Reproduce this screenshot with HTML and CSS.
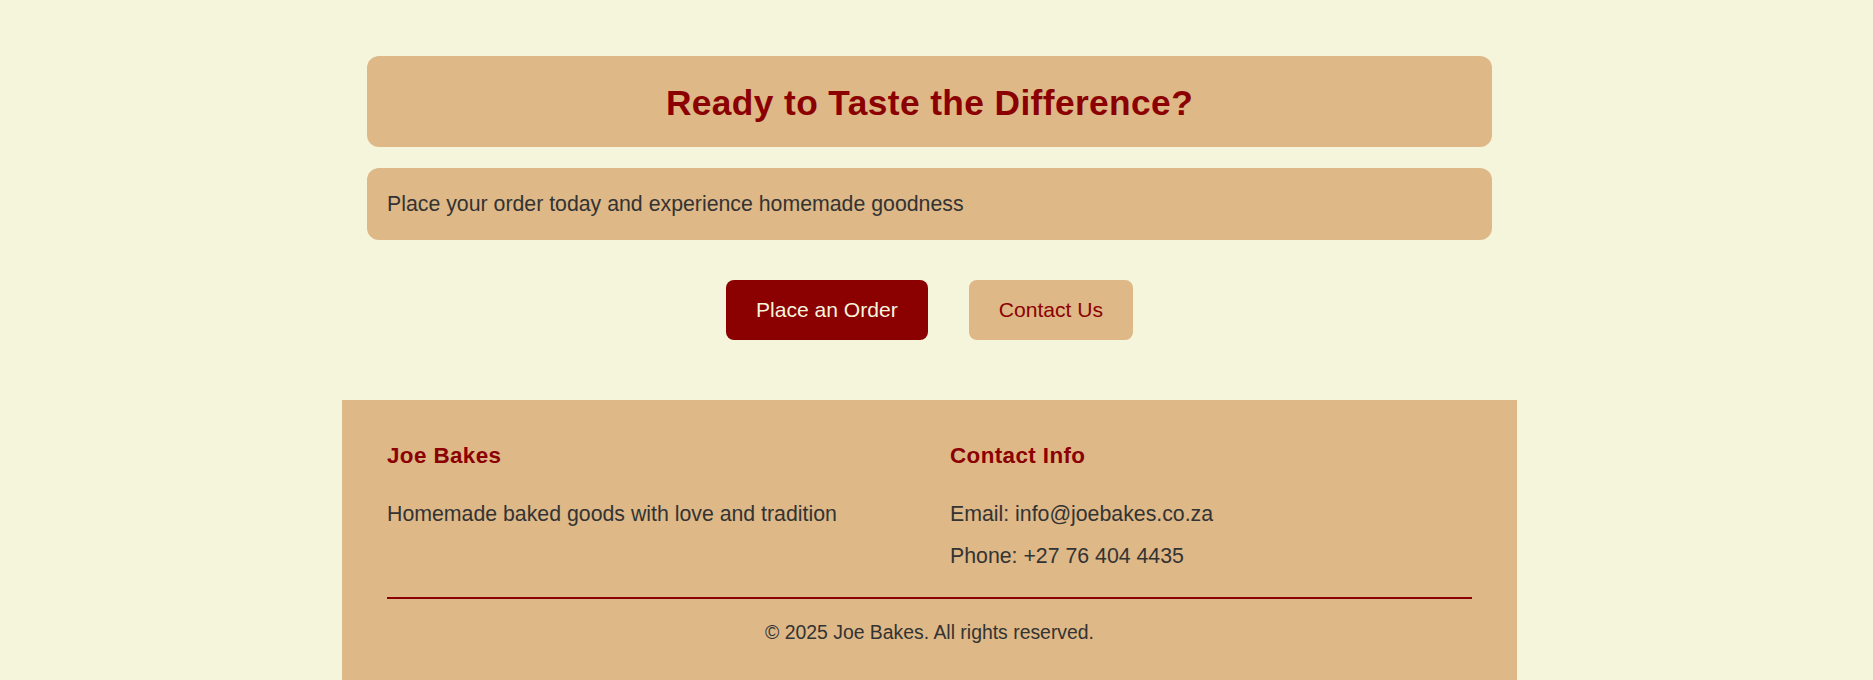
FILE: index.html
```html
<!DOCTYPE html>
<html lang="en">
<head>
<meta charset="utf-8">
<title>Joe Bakes</title>
<link rel="stylesheet" href="styles.css">
</head>
<body>
<div class="page">
  <section class="cta">
    <h2 class="cta-title">Ready to Taste the Difference?</h2>
    <p class="cta-text">Place your order today and experience homemade goodness</p>
    <div class="cta-actions">
      <a class="btn btn-primary" href="#">Place an Order</a>
      <a class="btn btn-secondary" href="#">Contact Us</a>
    </div>
  </section>
  <footer class="footer">
    <div class="footer-cols">
      <div class="footer-col">
        <h3 class="footer-heading">Joe Bakes</h3>
        <p class="footer-text">Homemade baked goods with love and tradition</p>
      </div>
      <div class="footer-col">
        <h3 class="footer-heading">Contact Info</h3>
        <p class="footer-text">Email: info@joebakes.co.za</p>
        <p class="footer-text">Phone: +27 76 404 4435</p>
      </div>
    </div>
    <div class="footer-bottom">
      <p class="copyright">&copy; 2025 Joe Bakes. All rights reserved.</p>
    </div>
  </footer>
</div>
</body>
</html>
```
FILE: styles.css
```css
html, body {
  margin: 0;
}
body {
  padding: 0 14px 0 0;
  background: #F5F5DC;
  color: #333;
  font-family: "Liberation Sans", Arial, sans-serif;
}
.page {
  max-width: 1175px;
  margin: 0 auto;
}
.cta {
  padding: 56px 25px 60px;
}
.cta-title {
  margin: 0;
  padding: 25px 24px 23px;
  background: #DEB887;
  border-radius: 12px;
  color: #8B0000;
  font-size: 35.3px;
  line-height: 43px;
  letter-spacing: 0.4px;
  font-weight: bold;
  text-align: center;
}
.cta-text {
  margin: 21px 0 0;
  padding: 24px 20px;
  background: #DEB887;
  border-radius: 12px;
  font-size: 21.3px;
  line-height: 24px;
}
.cta-actions {
  display: flex;
  justify-content: center;
  gap: 41px;
  margin-top: 40px;
}
.btn {
  display: block;
  height: 60px;
  padding: 0 30px;
  border-radius: 8px;
  font-size: 21.1px;
  line-height: 60px;
  text-decoration: none;
}
.btn-primary {
  background: #8B0000;
  color: #F5F5DC;
}
.btn-secondary {
  background: #DEB887;
  color: #8B0000;
}
.footer {
  background: #DEB887;
  padding: 43px 45px 40px;
}
.footer-cols {
  display: grid;
  grid-template-columns: 1fr 1fr;
  gap: 41px;
}
.footer-heading {
  margin: 0 0 33px;
  color: #8B0000;
  font-size: 22.4px;
  line-height: 26px;
  letter-spacing: 0.4px;
}
.footer-text {
  margin: 0 0 18px;
  font-size: 21.3px;
  line-height: 24px;
}
.footer-bottom {
  margin-top: 11px;
  border-top: 2px solid #8B0000;
  padding-top: 22px;
  text-align: center;
}
.copyright {
  margin: 0;
  font-size: 19.4px;
  line-height: 22px;
}
```
